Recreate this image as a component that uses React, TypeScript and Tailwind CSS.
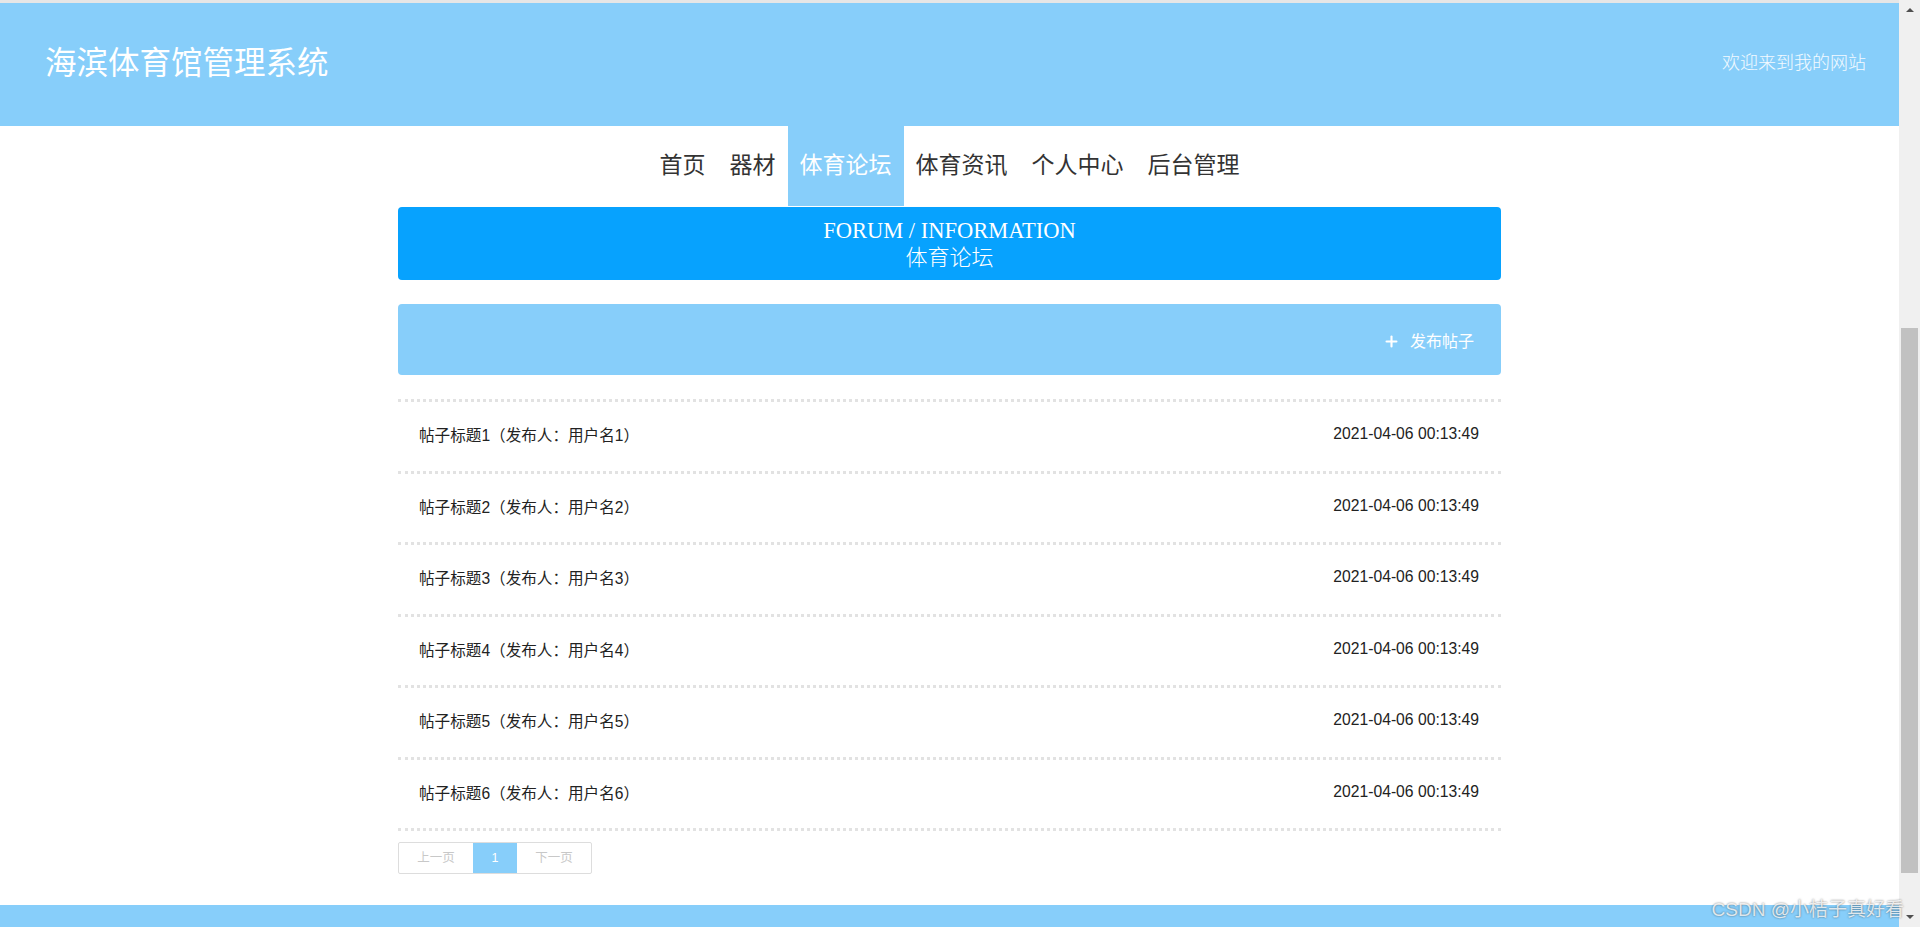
import { Plus } from 'lucide-react'

const posts = [1, 2, 3, 4, 5, 6].map((n) => ({
  id: n,
  title: `帖子标题${n}（发布人：用户名${n}）`,
  time: '2021-04-06 00:13:49',
}))

const navItems = ['首页', '器材', '体育论坛', '体育资讯', '个人中心', '后台管理']

const sans = "font-['Liberation_Sans','Noto_Sans_CJK_SC',sans-serif]"

function Scrollbar() {
  return (
    <div className="w-[21px] shrink-0 flex flex-col items-center bg-[#f0f0f0]">
      {/* up arrow */}
      <div className="h-[20px] flex items-center justify-center">
        <div className="w-0 h-0 border-l-[4px] border-r-[4px] border-b-[4px] border-l-transparent border-r-transparent border-b-[#505050]" />
      </div>
      <div className="flex-1 w-full flex flex-col items-center pt-[308px] pb-[34px]">
        <div className="w-[17px] flex-1 bg-[#c1c1c1]" />
      </div>
      {/* down arrow */}
      <div className="h-[20px] flex items-center justify-center">
        <div className="w-0 h-0 border-l-[4px] border-r-[4px] border-t-[4px] border-l-transparent border-r-transparent border-t-[#505050]" />
      </div>
    </div>
  )
}

export default function App() {
  return (
    <div className={`relative h-[927px] w-[1920px] overflow-hidden flex bg-white ${sans}`}>
      <div className="flex-1 flex flex-col min-w-0">
        <div className="h-[3px] bg-[#e6e6e6]" />

        {/* Header */}
        <header className="h-[123px] shrink-0 bg-[#87cefa] flex items-center justify-between pl-[45px] pr-[33px]">
          <h1 className="text-[31.5px] leading-none text-white -mt-[1px]">海滨体育馆管理系统</h1>
          <span className="text-[18px] leading-none text-white/90 font-light -mt-[4px]">欢迎来到我的网站</span>
        </header>

        {/* Nav */}
        <nav className="h-[80px] shrink-0 flex justify-center">
          {navItems.map((item) => (
            <a
              key={item}
              className={`px-3 flex items-center text-[23px] leading-none ${
                item === '体育论坛' ? 'bg-[#87cefa] text-white' : 'text-[#333]'
              }`}
            >
              <span className="mt-[-2px]">{item}</span>
            </a>
          ))}
        </nav>

        <main className="w-[1103px] mx-auto flex flex-col pt-[1px]">
          {/* Title banner */}
          <div className="h-[73px] rounded-[4px] bg-[#07a2fe] flex flex-col items-center justify-center text-white font-['Liberation_Serif','Noto_Sans_CJK_SC',serif] leading-[27px]">
            <div className="text-[22.5px]">FORUM / INFORMATION</div>
            <div className="text-[22px] font-light">体育论坛</div>
          </div>

          {/* Toolbar */}
          <div className="mt-[24px] h-[71px] rounded-[4px] bg-[#87cefa] flex items-center justify-end pr-[27px]">
            <button className="flex items-center gap-[10px] text-white text-[16px] leading-none mt-[4px]">
              <Plus size={17} strokeWidth={3} />
              <span>发布帖子</span>
            </button>
          </div>

          {/* Post list */}
          <ul className="mt-[24px] border-t-[3px] border-dotted border-[#e2e2e2]">
            {posts.map((p) => (
              <li
                key={p.id}
                className="h-[71.5px] border-b-[3px] border-dotted border-[#e2e2e2] flex items-center justify-between pl-[21px] pr-[22px]"
              >
                <span className="text-[15.6px] leading-none text-[#222]">{p.title}</span>
                <span className="text-[15.7px] leading-none text-[#222] -mt-[4px]">{p.time}</span>
              </li>
            ))}
          </ul>

          {/* Pagination */}
          <div className="mt-[11px] flex">
            <div className="flex h-[32px] border border-[#dddddd] rounded-[2px] text-[12.5px] text-[#c8c8c8]">
              <span className="w-[74px] flex items-center justify-center">上一页</span>
              <span className="w-[44px] flex items-center justify-center bg-[#87cefa] text-white">1</span>
              <span className="w-[74px] flex items-center justify-center">下一页</span>
            </div>
          </div>
        </main>

        <div className="flex-1" />
        <footer className="h-[22px] shrink-0 bg-[#87cefa]" />
      </div>

      <Scrollbar />

      {/* watermark */}
      <span className="absolute right-[16px] bottom-[8px] text-[19px] leading-none text-white/80 [text-shadow:0_0_2px_rgba(0,0,0,0.55)]">
        CSDN @小桔子真好看
      </span>
    </div>
  )
}
